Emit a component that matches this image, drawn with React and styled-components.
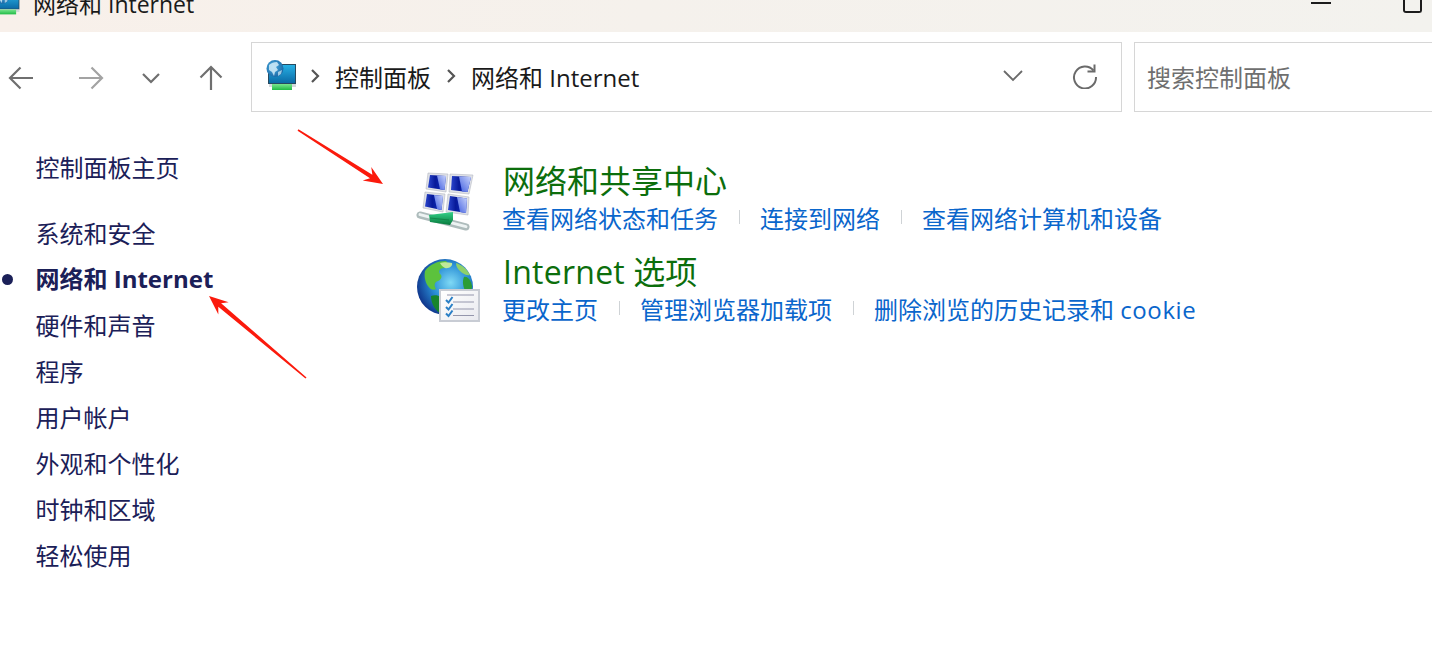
import React from 'react';
import styled, { createGlobalStyle } from 'styled-components';

const GlobalStyle = createGlobalStyle`
  html, body {
    margin: 0;
    padding: 0;
    background: #ffffff;
    overflow: hidden;
  }
  * {
    box-sizing: border-box;
  }
`;

const FONT = `"Open Sans", "Noto Sans CJK SC", sans-serif`;

const Page = styled.div`
  position: relative;
  width: 1432px;
  height: 666px;
  overflow: hidden;
  font-family: ${FONT};
  background: #fff;
`;

const TitleBar = styled.div`
  height: 32px;
  background: linear-gradient(90deg, #f8f0ea 0%, #f5f1ec 45%, #f3f2ee 100%);
  overflow: hidden;
  display: flex;
  justify-content: space-between;
`;

const TitleLeft = styled.div`
  display: flex;
  align-items: center;
  gap: 12px;
  height: 24px;
  margin-top: -9px;
  margin-left: -5px;
  font-size: 23px;
  color: #1a1a1a;
`;

const WindowButtons = styled.div`
  display: flex;
  align-items: flex-start;
  gap: 72px;
  padding-right: 10px;
`;

const MinLine = styled.div`
  width: 20px;
  height: 2px;
  margin-top: 2px;
  background: #1c1c1c;
`;

const MaxBox = styled.div`
  width: 19px;
  height: 13px;
  border: 2px solid #1c1c1c;
  border-top: none;
  border-radius: 0 0 3px 3px;
`;

const Toolbar = styled.div`
  display: flex;
  align-items: center;
  height: 70px;
  margin-top: 10px;
`;

const NavButtons = styled.div`
  width: 251px;
  flex: none;
  display: flex;
  align-items: center;
  padding: 2px 0 0 7px;
`;

const NavIcon = styled.svg`
  display: block;
  flex: none;
  margin-right: ${p => p.$gap}px;
`;

const AddressBox = styled.div`
  width: 871px;
  height: 70px;
  flex: none;
  border: 1px solid #d6d6d6;
  display: flex;
  align-items: center;
  padding: 0 0 2px 14px;
  font-size: 24px;
  color: #1a1a1a;
`;

const Crumb = styled.span`
  margin-left: 15px;
  white-space: nowrap;
`;

const CrumbArrow = styled.svg`
  margin-left: ${p => p.$gap}px;
  flex: none;
`;

const AddressActions = styled.div`
  margin-left: auto;
  display: flex;
  align-items: center;
  gap: 48px;
  padding-right: 23px;
`;

const SearchBox = styled.div`
  flex: 1;
  height: 70px;
  margin-left: 12px;
  border: 1px solid #d6d6d6;
  border-right: none;
  display: flex;
  align-items: center;
  padding: 0 0 2px 12px;
  font-size: 24px;
  color: #6f6f6f;
`;

const Body = styled.div`
  display: flex;
  padding-top: 32px;
`;

const Sidebar = styled.nav`
  width: 416px;
  flex: none;
  padding: 1px 0 0 36px;
  font-size: 24px;
  color: #1b2058;
`;

const SideText = styled.span`
  margin-left: -0.5px;
`;

const HomeLink = styled.div`
  height: 46px;
  line-height: 46px;
  margin-bottom: 20px;
`;

const SideItem = styled.div`
  position: relative;
  height: 46px;
  line-height: ${p => (p.$active ? 44 : 46)}px;
  white-space: nowrap;
  font-weight: ${p => (p.$active ? 700 : 400)};
  ${p => p.$active && `
    &::before {
      content: '';
      position: absolute;
      left: -34px;
      top: 17px;
      width: 11px;
      height: 11px;
      border-radius: 50%;
      background: #1b2058;
    }
  `}
`;

const Tasks = styled.div`
  display: flex;
  flex-direction: column;
  gap: 14px;
  padding-top: 16px;
`;

const Task = styled.section`
  display: flex;
  gap: 23px;
  height: 77px;
`;

const TaskIcon = styled.svg`
  display: block;
  flex: none;
  margin-top: 7px;
`;

const TaskText = styled.div`
  display: flex;
  flex-direction: column;
`;

const TaskTitle = styled.div`
  font-size: 32px;
  line-height: 42px;
  height: 39px;
  color: #0c6e0c;
  white-space: nowrap;
`;

const LinkRow = styled.div`
  display: flex;
  align-items: center;
  height: 36px;
  margin-left: -1px;
  font-size: 24px;
  color: #0a66cc;
  white-space: nowrap;
`;

const Sep = styled.span`
  width: 1px;
  height: 14px;
  margin: 0 20px 0 21px;
  background: #cfd3d6;
`;

const Latin = styled.span`
  letter-spacing: ${p => p.$spacing}px;
`;

const ArrowLayer = styled.svg`
  position: absolute;
  left: 0;
  top: 0;
  pointer-events: none;
`;

const MonitorIcon = ({ size = 32 }) => (
  <svg width={size} height={size} viewBox="0 0 32 32" style={{ display: 'block', flex: 'none' }}>
    <defs>
      <linearGradient id="mon" x1="0" y1="0" x2="0" y2="1">
        <stop offset="0" stopColor="#27b0e4" />
        <stop offset="1" stopColor="#0b6aa6" />
      </linearGradient>
      <radialGradient id="ball" cx="0.4" cy="0.4" r="0.7">
        <stop offset="0" stopColor="#4cb1e4" />
        <stop offset="1" stopColor="#155f9e" />
      </radialGradient>
      <linearGradient id="base" x1="0" y1="0" x2="0" y2="1">
        <stop offset="0" stopColor="#7be58f" />
        <stop offset="1" stopColor="#1fbb45" />
      </linearGradient>
    </defs>
    <rect x="2" y="4" width="28" height="20" fill="#274a60" />
    <rect x="3" y="5" width="26" height="18" fill="url(#mon)" />
    <rect x="3" y="24" width="27" height="3" fill="#d5d9dc" />
    <rect x="6" y="24" width="20" height="6" fill="url(#base)" />
    <circle cx="9" cy="8.5" r="8.5" fill="url(#ball)" />
    <path d="M3 5c2-2 5-3 8-3l2 3-3 2 2 3-3 2-1 4-2-4-3-2z" fill="#d3ecf8" opacity="0.85" />
    <path d="M12 12l4-2-1 4-3 2z" fill="#d3ecf8" opacity="0.7" />
  </svg>
);

const Pane = ({ points, inner, streak }) => (
  <g>
    <polygon points={points} fill="#dfe1e7" stroke="#b5b8c2" strokeWidth="0.6" />
    <polygon points={inner} fill="url(#pane)" />
    <polygon points={streak} fill="url(#shine)" />
  </g>
);

const NetworkIcon = () => (
  <TaskIcon width="64" height="64" viewBox="0 0 64 64">
    <defs>
      <linearGradient id="pane" x1="0" y1="0" x2="1" y2="0">
        <stop offset="0" stopColor="#2a45cc" />
        <stop offset="0.4" stopColor="#071a9a" />
        <stop offset="1" stopColor="#0f2fc4" />
      </linearGradient>
      <linearGradient id="shine" x1="0" y1="1" x2="1" y2="0">
        <stop offset="0" stopColor="#3f5de0" />
        <stop offset="1" stopColor="#c9d4fb" />
      </linearGradient>
      <linearGradient id="pipe" x1="0" y1="0" x2="0" y2="1">
        <stop offset="0" stopColor="#35d28a" />
        <stop offset="1" stopColor="#087a3c" />
      </linearGradient>
    </defs>
    <Pane
      points="12,6 32,7 30,25 10,22"
      inner="14,8 30,9 28.5,23 12,20.5"
      streak="21,8.4 30,9 28.5,23 24,22.3"
    />
    <Pane
      points="34,7 57,8 53,27 33,25"
      inner="36,9 55,10 51.5,25 35,23"
      streak="43,9.4 55,10 51.5,25 46,24.4"
    />
    <Pane
      points="9,25 29,27 27,45 7,41"
      inner="11,27 27,29 25.5,43 9,39.5"
      streak="18,27.9 27,29 25.5,43 21,42"
    />
    <Pane
      points="32,27 53,30 52,48 30,45"
      inner="34,29 51,31.5 50,46 32,43"
      streak="41,30 51,31.5 50,46 44,45"
    />
    <path d="M4 48l46 12" stroke="#aebcbc" strokeWidth="7" strokeLinecap="round" />
    <path d="M4 47.6l46 12" stroke="#edf3f3" strokeWidth="3" strokeLinecap="round" />
    <path d="M13 48l24-3 0 8-3 5-20-3z" fill="url(#pipe)" />
    <path d="M14 51l19 2" stroke="#0a6a35" strokeWidth="1" opacity="0.5" />
  </TaskIcon>
);

const GlobeIcon = () => (
  <TaskIcon width="64" height="64" viewBox="0 0 64 64">
    <defs>
      <radialGradient id="sea" cx="0.6" cy="0.42" r="0.65">
        <stop offset="0" stopColor="#7fd9f5" />
        <stop offset="0.5" stopColor="#2a8fd6" />
        <stop offset="1" stopColor="#0d2e86" />
      </radialGradient>
      <linearGradient id="doc" x1="0" y1="0" x2="1" y2="1">
        <stop offset="0" stopColor="#ffffff" />
        <stop offset="1" stopColor="#e9eaef" />
      </linearGradient>
    </defs>
    <circle cx="29" cy="29" r="28" fill="url(#sea)" />
    <path d="M9 13c5-7 13-10 21-10 3 3 2 5-2 7-4 0-6 3-4 6 3 2 1 6-2 7-4 1-4 5-2 8-3 2-6 0-8-3-3-4-4-10-3-15z" fill="#5cc23d" />
    <path d="M24 5c3-1 8-1 12 0 1 3-3 6-7 5-2-1-4-3-5-5z" fill="#bfe89a" />
    <path d="M40 5c6 2 11 6 14 12-3 1-7-1-10-4-2-2-4-4-4-8z" fill="#8ed06a" />
    <path d="M15 38c6-2 12 1 14 6 1 4 0 9-3 12-6-2-11-10-11-18z" fill="#17842c" />
    <path d="M48 19c4-1 7 4 8 9 0 4-3 8-6 6-3-4-4-11-2-15z" fill="#2c9c36" />
    <rect x="23" y="31" width="41" height="33" fill="#c8ccd4" />
    <rect x="25" y="33" width="37" height="29" fill="url(#doc)" />
    <g stroke="#9496ac" strokeWidth="1">
      <path d="M31 37h27M37 44h21M37 51h21M37 57.5h21" />
    </g>
    <g stroke="#2a7fc6" strokeWidth="2" fill="none">
      <path d="M30 42l2.5 2.5 4-5.5M30 49l2.5 2.5 4-5.5M30 55.5l2.5 2.5 4-5.5" />
    </g>
  </TaskIcon>
);

const links1 = ['查看网络状态和任务', '连接到网络', '查看网络计算机和设备'];
const links2 = [
  '更改主页',
  '管理浏览器加载项',
  <React.Fragment key="history">删除浏览的历史记录和 <Latin $spacing={0.6}>cookie</Latin></React.Fragment>,
];
const sideItems = ['系统和安全', '网络和 Internet', '硬件和声音', '程序', '用户帐户', '外观和个性化', '时钟和区域', '轻松使用'];

const Links = ({ items }) => (
  <LinkRow>
    {items.map((text, i) => (
      <React.Fragment key={i}>
        {i > 0 && <Sep />}
        <span>{text}</span>
      </React.Fragment>
    ))}
  </LinkRow>
);

const RedArrow = ({ x1, y1, x2, y2 }) => {
  const a = Math.atan2(y2 - y1, x2 - x1);
  const pt = (x, y, d, o) => `${x - d * Math.cos(a) - o * Math.sin(a)},${y - d * Math.sin(a) + o * Math.cos(a)}`;
  const points = [
    pt(x2, y2, 0, 0),
    pt(x2, y2, 19, 8),
    pt(x2, y2, 14, 2.2),
    pt(x1, y1, 0, 0.8),
    pt(x1, y1, 0, -0.8),
    pt(x2, y2, 14, -2.2),
    pt(x2, y2, 19, -8),
  ].join(' ');
  return <polygon points={points} fill="#fb1a0c" />;
};

export default function App() {
  return (
    <Page>
      <GlobalStyle />
      <TitleBar>
        <TitleLeft>
          <MonitorIcon size={26} />
          <span>网络和 Internet</span>
        </TitleLeft>
        <WindowButtons>
          <MinLine />
          <MaxBox />
        </WindowButtons>
      </TitleBar>
      <Toolbar>
        <NavButtons>
          <NavIcon $gap={42} width="28" height="28" viewBox="0 0 28 28" fill="none" stroke="#6f6f6f" strokeWidth="2.2">
            <path d="M26 14H3M13.5 3.5L3 14l10.5 10.5" />
          </NavIcon>
          <NavIcon $gap={36} width="28" height="28" viewBox="0 0 28 28" fill="none" stroke="#a3a3a3" strokeWidth="2.2">
            <path d="M2 14h23M14.5 3.5L25 14 14.5 24.5" />
          </NavIcon>
          <NavIcon $gap={36} width="20" height="20" viewBox="0 0 20 20" fill="none" stroke="#6f6f6f" strokeWidth="2.2">
            <path d="M2 6l8 8 8-8" />
          </NavIcon>
          <NavIcon $gap={0} width="28" height="28" viewBox="0 0 28 28" fill="none" stroke="#6f6f6f" strokeWidth="2.2">
            <path d="M14 26V3M3.5 13.5L14 3l10.5 10.5" />
          </NavIcon>
        </NavButtons>
        <AddressBox>
          <MonitorIcon size={32} />
          <CrumbArrow $gap={13} width="9" height="14" viewBox="0 0 9 14" fill="none" stroke="#555" strokeWidth="2.2">
            <path d="M1 1l6 6-6 6" />
          </CrumbArrow>
          <Crumb>控制面板</Crumb>
          <CrumbArrow $gap={16} width="9" height="14" viewBox="0 0 9 14" fill="none" stroke="#555" strokeWidth="2.2">
            <path d="M1 1l6 6-6 6" />
          </CrumbArrow>
          <Crumb>网络和 Internet</Crumb>
          <AddressActions>
            <svg width="22" height="14" viewBox="0 0 22 14" fill="none" stroke="#6a6a6a" strokeWidth="1.8">
              <path d="M2 2l9 9 9-9" />
            </svg>
            <svg width="26" height="26" viewBox="0 0 26 26" fill="none" stroke="#6a6a6a" strokeWidth="2">
              <path d="M21.5 7.5A11 11 0 1 0 24 14" />
              <path d="M22.5 1.5v7h-7" />
            </svg>
          </AddressActions>
        </AddressBox>
        <SearchBox>搜索控制面板</SearchBox>
      </Toolbar>
      <Body>
        <Sidebar>
          <HomeLink><SideText>控制面板主页</SideText></HomeLink>
          {sideItems.map((item, i) => (
            <SideItem key={item} $active={i === 1}><SideText>{item}</SideText></SideItem>
          ))}
        </Sidebar>
        <Tasks>
          <Task>
            <NetworkIcon />
            <TaskText>
              <TaskTitle>网络和共享中心</TaskTitle>
              <Links items={links1} />
            </TaskText>
          </Task>
          <Task>
            <GlobeIcon />
            <TaskText>
              <TaskTitle><Latin $spacing={0.25}>Internet</Latin> 选项</TaskTitle>
              <Links items={links2} />
            </TaskText>
          </Task>
        </Tasks>
      </Body>
      <ArrowLayer width="1432" height="666" viewBox="0 0 1432 666">
        <RedArrow x1={298} y1={130} x2={383} y2={184} />
        <RedArrow x1={306} y1={378} x2={209} y2={296} />
      </ArrowLayer>
    </Page>
  );
}
